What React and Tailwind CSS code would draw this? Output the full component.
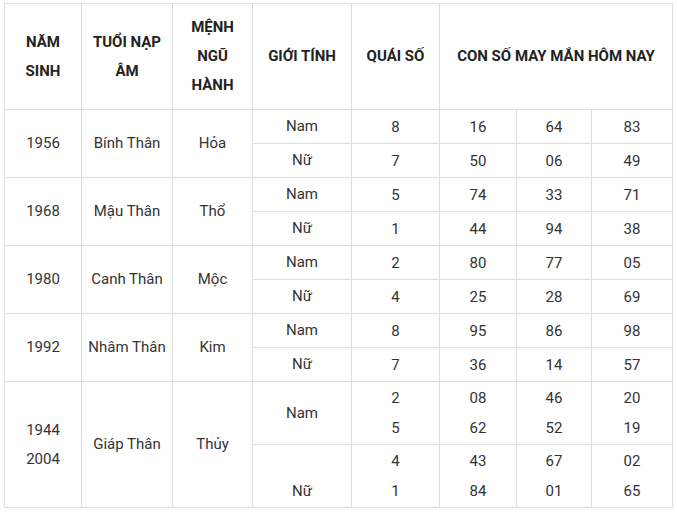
import React from 'react';

const groups = [
  { year: ['1956'], tuoi: 'Bính Thân', menh: 'Hỏa', rows: [
    { g: 'Nam', q: ['8'], n: [['16', '64', '83']] },
    { g: 'Nữ', q: ['7'], n: [['50', '06', '49']] },
  ] },
  { year: ['1968'], tuoi: 'Mậu Thân', menh: 'Thổ', rows: [
    { g: 'Nam', q: ['5'], n: [['74', '33', '71']] },
    { g: 'Nữ', q: ['1'], n: [['44', '94', '38']] },
  ] },
  { year: ['1980'], tuoi: 'Canh Thân', menh: 'Mộc', rows: [
    { g: 'Nam', q: ['2'], n: [['80', '77', '05']] },
    { g: 'Nữ', q: ['4'], n: [['25', '28', '69']] },
  ] },
  { year: ['1992'], tuoi: 'Nhâm Thân', menh: 'Kim', rows: [
    { g: 'Nam', q: ['8'], n: [['95', '86', '98']] },
    { g: 'Nữ', q: ['7'], n: [['36', '14', '57']] },
  ] },
  { year: ['1944', '2004'], tuoi: 'Giáp Thân', menh: 'Thủy', rows: [
    { g: 'Nam', q: ['2', '5'], n: [['08', '46', '20'], ['62', '52', '19']] },
    { g: 'Nữ', q: ['4', '1'], n: [['43', '67', '02'], ['84', '01', '65']], bottom: true },
  ] },
];

const cell = 'border border-[#dddddd] text-center align-middle p-0';

const Lines = ({ items, lh }) => (
  <div className={lh}>
    {items.map((t, i) => (
      <div key={i}>{t}</div>
    ))}
  </div>
);

export default function App() {
  return (
    <div className="bg-white w-[677px] h-[514px] pl-[4px] pt-[3px]" style={{ fontFamily: 'Roboto, "Liberation Sans", sans-serif' }}>
      <table className="border-collapse table-fixed w-[668px] text-[15px] text-[#333333]">
        <colgroup>
          <col className="w-[77px]" />
          <col className="w-[91px]" />
          <col className="w-[80px]" />
          <col className="w-[99px]" />
          <col className="w-[88px]" />
          <col className="w-[77px]" />
          <col className="w-[75px]" />
          <col className="w-[81px]" />
        </colgroup>
        <thead>
          <tr className="h-[106px] font-bold text-[#222222] leading-[29px]">
            <th className={cell}>NĂM<br />SINH</th>
            <th className={cell}>TUỔI NẠP<br />ÂM</th>
            <th className={cell}>MỆNH<br />NGŨ<br />HÀNH</th>
            <th className={cell}>GIỚI TÍNH</th>
            <th className={cell}>QUÁI SỐ</th>
            <th className={cell} colSpan={3}>CON SỐ MAY MẮN HÔM NAY</th>
          </tr>
        </thead>
        <tbody>
          {groups.map((grp) =>
            grp.rows.map((r, ri) => {
              const tall = r.q.length > 1;
              const h = tall ? 'h-[63px]' : 'h-[34px]';
              return (
                <tr key={grp.year[0] + ri} className={h}>
                  {ri === 0 && (
                    <>
                      <td className={cell} rowSpan={2}><Lines items={grp.year} lh="leading-[29px]" /></td>
                      <td className={cell} rowSpan={2}>{grp.tuoi}</td>
                      <td className={cell} rowSpan={2}>{grp.menh}</td>
                    </>
                  )}
                  <td className={cell}>
                    {r.bottom ? <Lines items={['\u00a0', r.g]} lh="leading-[30px]" /> : r.g}
                  </td>
                  <td className={cell}><Lines items={r.q} lh="leading-[30px]" /></td>
                  {[0, 1, 2].map((c) => (
                    <td key={c} className={cell}>
                      <Lines items={r.n.map((line) => line[c])} lh="leading-[30px]" />
                    </td>
                  ))}
                </tr>
              );
            })
          )}
        </tbody>
      </table>
    </div>
  );
}
